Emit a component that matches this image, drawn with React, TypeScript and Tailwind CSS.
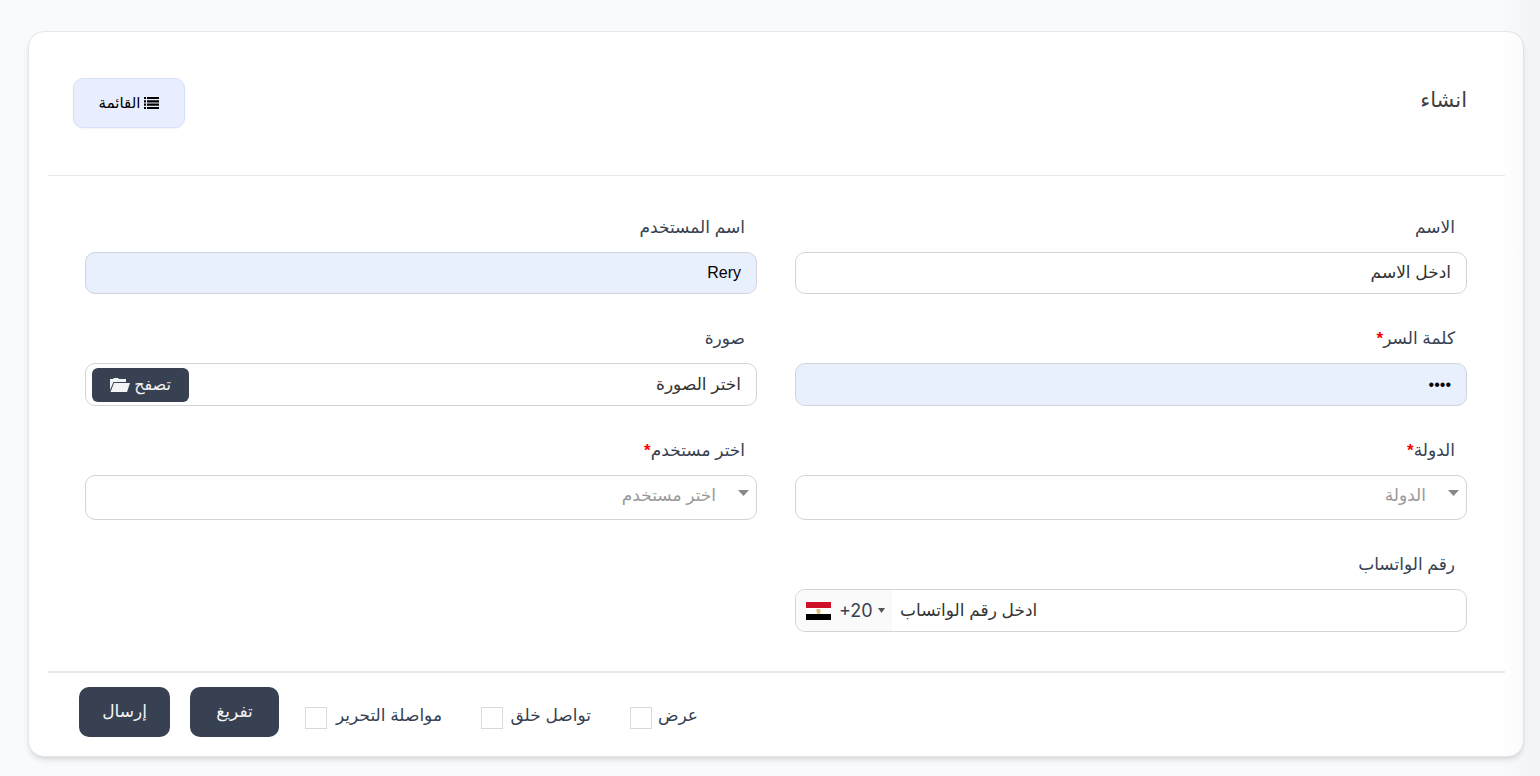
import { useState } from 'react'
import type { ReactNode } from 'react'

const CHECKS = [
  { id: 'view', label: 'عرض', width: 'w-[68px]' },
  { id: 'create', label: 'تواصل خلق', width: 'w-[110px]' },
  { id: 'edit', label: 'مواصلة التحرير', width: 'w-[137px]' },
]

const FIELD = 'block w-full rounded-[10px] border border-[#d1d5db] px-[15px] placeholder:text-[#333] placeholder:opacity-100 outline-none focus:border-gray-500'

function Field({ id, label, required, children }: { id: string; label: string; required?: boolean; children: ReactNode }) {
  return (
    <div>
      <label htmlFor={id} className="mb-2 block px-3 text-[17px] leading-8 font-medium text-[#374151]">
        {label}
        {required && <span className="font-bold text-[#f00]">*</span>}
      </label>
      {children}
    </div>
  )
}

function Select({ id, label }: { id: string; label: string }) {
  return (
    <div className="relative">
      <select id={id} defaultValue="" className={`${FIELD} h-[45px] appearance-none bg-white pb-1 ps-[40px] text-[17px] text-[#999]`}>
        <option value="">{label}</option>
      </select>
      <svg className="pointer-events-none absolute start-2 top-[15px] h-[6px] w-[11px] fill-[#888]" viewBox="0 0 11 6" aria-hidden="true">
        <path d="M0 0h11L5.500 6z" />
      </svg>
    </div>
  )
}

function ListIcon() {
  return (
    <svg width="15" height="12" viewBox="0 0 15 12" fill="currentColor" aria-hidden="true">
      <path d="M0 0h2v2H0zM3 0h12v2H3zM0 3.300h2v2.200H0zM3 3.300h12v2.200H3zM0 6.600h2v2.200H0zM3 6.600h12v2.200H3zM0 10h2v2H0zM3 10h12v2H3z" />
    </svg>
  )
}

function FolderIcon() {
  return (
    <svg width="20" height="14" viewBox="0 0 20 14" fill="currentColor" aria-hidden="true">
      <path d="M0 12V1h3l1-1h4l1 1h7v3H3.500z" />
      <path d="M4 5h16l-3 9H.500z" />
    </svg>
  )
}

function EgyptFlag() {
  return (
    <svg width="25" height="18" viewBox="0 0 25 18" aria-hidden="true">
      <path fill="#ce1126" d="M0 0h25v6H0z" />
      <path fill="#fff" d="M0 6h25v6H0z" />
      <path fill="#000" d="M0 12h25v6H0z" />
      <path fill="#dcc07c" d="M10.500 7h4v3l-1 2h-2l-1-2z" />
    </svg>
  )
}

export default function App() {
  const [user, setUser] = useState('Rery')
  const [password, setPassword] = useState('1234')

  return (
    <div dir="rtl" className="relative min-h-screen bg-[#f9fafc] pt-[31px] pr-4 pb-[19px] pl-7 font-['Liberation_Sans','DejaVu_Sans',sans-serif]">
      <main className="rounded-2xl border border-[#e5e7eb] bg-white pr-[18px] pb-[19px] pl-[19px] shadow-md">
        {/* Header */}
        <header className="flex h-36 items-start justify-between border-b border-[#e5e7eb] ps-[38px] pe-[25px] pt-[46px]">
          <h1 className="text-[21px] leading-[44px] font-medium text-[#3f3f3f]">انشاء</h1>
          <a
            href="#list"
            className="flex h-[50px] w-28 items-center justify-center gap-1 rounded-[10px] border border-[#d6e0fb] bg-[#e8eefd] text-[15px] font-medium text-black shadow-xs"
          >
            <ListIcon />
            القائمة
          </a>
        </header>

        <form onSubmit={(e) => e.preventDefault()}>
          <div className="grid grid-cols-2 gap-x-[38px] gap-y-[29px] ps-[38px] pe-[37px] pt-9 pb-[39px]">
            <Field id="name" label="الاسم">
              <input id="name" type="text" placeholder="ادخل الاسم" className={`${FIELD} h-[42px] bg-white text-[17px]`} />
            </Field>
            <Field id="username" label="اسم المستخدم">
              <input id="username" type="text" value={user} onChange={(e) => setUser(e.target.value)} className={`${FIELD} h-[42px] bg-[#e8f0fe] text-base text-black`} />
            </Field>

            <Field id="password" label="كلمة السر" required>
              <input id="password" type="password" value={password} onChange={(e) => setPassword(e.target.value)} className={`${FIELD} h-[43px] bg-[#e8f0fe] text-base text-black`} />
            </Field>
            <Field id="image" label="صورة">
              <div className="flex h-[43px] items-center rounded-[10px] border border-[#d1d5db] ps-[15px] pe-[6px]">
                <input id="image" type="text" readOnly placeholder="اختر الصورة" className="min-w-0 flex-1 text-[17px] outline-none placeholder:text-[#333] placeholder:opacity-100" />
                <button type="button" className="flex h-[34px] w-[97px] items-center justify-center gap-1 rounded-md bg-[#374151] text-base font-medium text-[#f3f4f6]">
                  تصفح
                  <FolderIcon />
                </button>
              </div>
            </Field>

            <Field id="country" label="الدولة" required>
              <Select id="country" label="الدولة" />
            </Field>
            <Field id="member" label="اختر مستخدم" required>
              <Select id="member" label="اختر مستخدم" />
            </Field>

            <Field id="whatsapp" label="رقم الواتساب">
              <div dir="ltr" className="flex h-[43px] overflow-hidden rounded-[10px] border border-[#d1d5db]">
                <button type="button" aria-label="+20" className="flex w-24 items-center bg-[#fafafa] ps-[10px] font-[Inter] text-lg text-[#374151]">
                  <EgyptFlag />
                  <span className="w-[39px] ps-2">+20</span>
                  <svg className="ms-2 fill-[#555]" width="7" height="5" viewBox="0 0 7 5" aria-hidden="true">
                    <path d="M0 0h7L3.500 5z" />
                  </svg>
                </button>
                <input id="whatsapp" type="tel" placeholder="ادخل رقم الواتساب" className="min-w-0 flex-1 px-2 text-[17px] outline-none placeholder:text-[#333] placeholder:opacity-100" />
              </div>
            </Field>
          </div>

          {/* Footer actions */}
          <footer className="flex items-start justify-end border-t-2 border-[#e8e8e8] pe-[31px] pt-[14px]">
            <div className="flex gap-[39px] pt-4">
              {CHECKS.map((c) => (
                <label key={c.id} htmlFor={c.id} className={`flex items-end justify-between whitespace-nowrap text-[17px] leading-[26px] font-medium text-[#374151] ${c.width}`}>
                  {c.label}
                  <input id={c.id} type="checkbox" className="size-[22px] shrink-0 appearance-none border border-[#d9d9d9] bg-white checked:bg-[#374151]" />
                </label>
              ))}
            </div>
            <button type="reset" className="ms-[26px] h-[50px] w-[89px] rounded-[10px] bg-[#374151] text-[17px] font-medium text-[#f3f4f6]">
              تفريغ
            </button>
            <button type="submit" className="ms-5 h-[50px] w-[91px] rounded-[10px] bg-[#374151] text-[17px] font-medium text-[#f3f4f6]">
              إرسال
            </button>
          </footer>
        </form>
      </main>

      {/* Soft shade along the side edge */}
      <div className="pointer-events-none absolute inset-y-0 right-0 w-10 bg-gradient-to-r from-transparent to-black/[0.03]" />
    </div>
  )
}
